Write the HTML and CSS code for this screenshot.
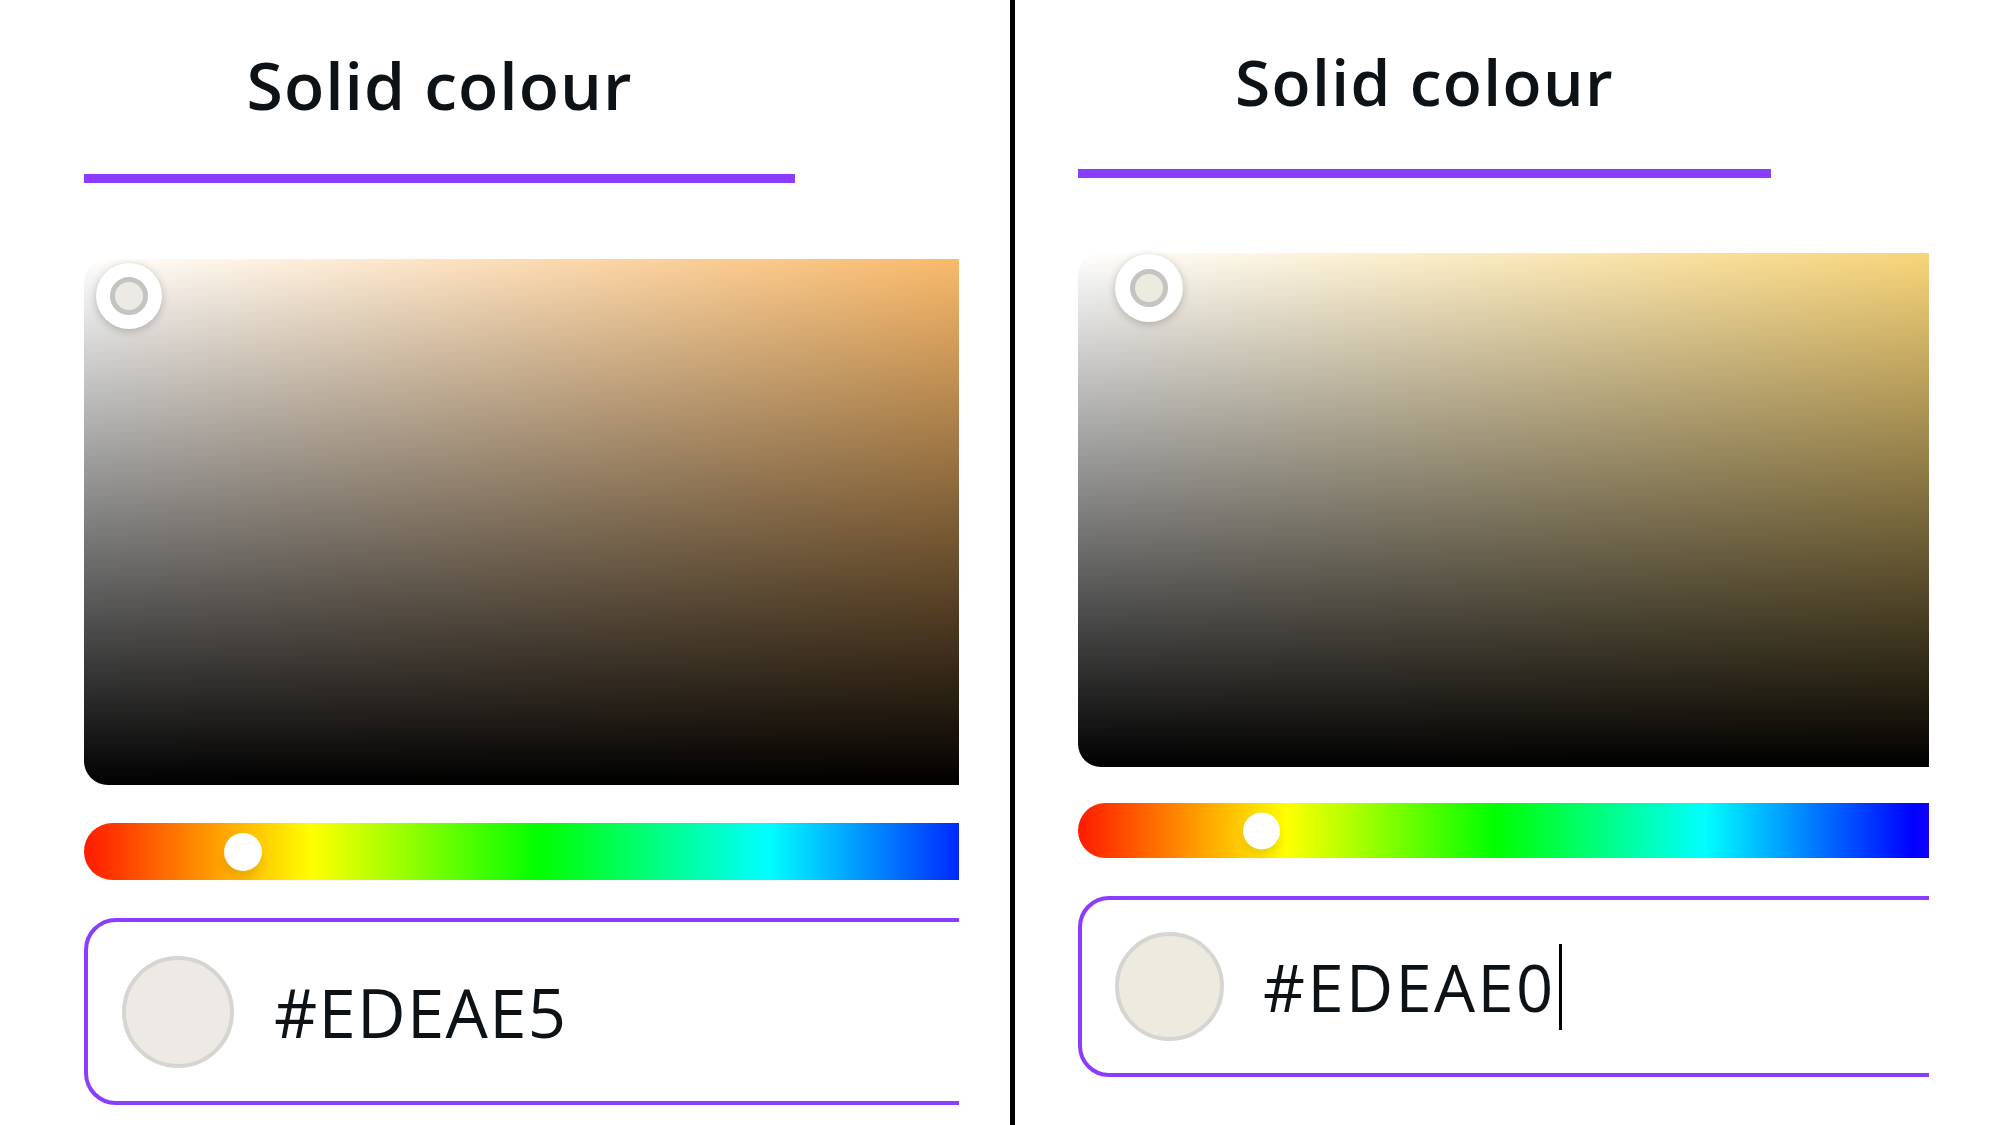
FILE: index.html
```html
<!DOCTYPE html>
<html lang="en">
<head>
<meta charset="utf-8">
<title>Solid colour picker comparison</title>
<link rel="stylesheet" href="styles.css">
</head>
<body>
<main class="stage">
  <section class="shot shot-a">
    <div class="crop crop-a">
      <div class="panel panel-a">
        <div class="tabs">
          <div class="tab tab-active">
            <span class="tab-label">Solid colour</span>
            <span class="tab-bar"></span>
          </div>
          <div class="tab tab-next">
            <span class="tab-label">G</span>
          </div>
        </div>
        <div class="picker picker-a">
          <span class="handle"><span class="handle-dot dot-a"></span></span>
        </div>
        <div class="hue">
          <span class="hue-thumb"></span>
        </div>
        <div class="field">
          <span class="swatch swatch-a"></span>
          <span class="hex">#EDEAE5</span>
        </div>
      </div>
    </div>
  </section>
  <div class="divider"></div>
  <section class="shot shot-b">
    <div class="crop crop-b">
      <div class="panel panel-b">
        <div class="tabs">
          <div class="tab tab-active">
            <span class="tab-label">Solid colour</span>
            <span class="tab-bar"></span>
          </div>
        </div>
        <div class="picker picker-b">
          <span class="handle"><span class="handle-dot dot-b"></span></span>
        </div>
        <div class="hue">
          <span class="hue-thumb"></span>
        </div>
        <div class="field">
          <span class="swatch swatch-b"></span>
          <span class="hex">#EDEAE0</span><span class="caret"></span>
        </div>
      </div>
    </div>
  </section>
</main>
</body>
</html>
```

FILE: styles.css
```css
* {
  box-sizing: border-box;
}

html,
body {
  margin: 0;
  padding: 0;
  background: #ffffff;
}

body {
  font-family: "Open Sans", "Noto Sans", sans-serif;
  color: #0d1216;
}

.stage {
  display: flex;
  width: 2000px;
  height: 1125px;
  overflow: hidden;
}

.shot {
  height: 100%;
  background: #ffffff;
}

.shot-a {
  width: 1010px;
  flex: none;
}

.shot-b {
  flex: 1;
}

.divider {
  width: 5px;
  flex: none;
  background: #000000;
}

.crop {
  height: 100%;
  overflow: hidden;
}

.crop-a {
  width: 959px;
}

.crop-b {
  width: 914px;
}

.panel {
  width: 1600px;
}

.tabs {
  display: flex;
}

.tab {
  display: flex;
  flex-direction: column;
  align-items: center;
  flex: none;
}

.tab-label {
  font-weight: 600;
  white-space: nowrap;
}

.tab-bar {
  display: block;
  width: 100%;
  height: 9px;
  background: #8b3dff;
}

.tab-next {
  align-items: flex-start;
}

.picker {
  position: relative;
  border-radius: 24px 0 0 24px;
}

.handle {
  position: absolute;
  display: flex;
  align-items: center;
  justify-content: center;
  border-radius: 50%;
  background: #ffffff;
  box-shadow: 0 2px 9px rgba(0, 0, 0, 0.22);
}

.handle-dot {
  display: block;
  border-radius: 50%;
  border: 5px solid #c4c4c2;
}

.dot-a {
  background: #edeae5;
}

.dot-b {
  background: #edeae0;
}

.hue {
  position: relative;
  background: linear-gradient(to right,
      #ff1a00 0%,
      #ffff00 16.67%,
      #00ff00 33.33%,
      #00ffff 50%,
      #0000ff 66.67%,
      #ff00ff 83.33%,
      #ff0000 100%);
}

.hue-thumb {
  position: absolute;
  top: 50%;
  transform: translateY(-50%);
  border-radius: 50%;
  background: #ffffff;
  box-shadow: 0 7px 8px rgba(0, 0, 0, 0.08);
}

.field {
  display: flex;
  align-items: center;
  border: 4px solid #8b3dff;
}

.swatch {
  display: block;
  flex: none;
  border-radius: 50%;
  border: 4px solid #d6d5d2;
}

.swatch-a {
  background: #edeae5;
}

.swatch-b {
  background: #edeae0;
}

.hex {
  font-weight: 400;
  white-space: nowrap;
  color: #0d1216;
}

.caret {
  display: inline-block;
  width: 3px;
  height: 86px;
  margin-left: 3px;
  background: #000000;
}

/* ---------- left screenshot ---------- */
.panel-a {
  padding-top: 51px;
  padding-left: 84px;
}

.panel-a .tab-active {
  width: 711px;
}

.panel-a .tab-next {
  width: 300px;
  padding-left: 161px;
}

.panel-a .tab-label {
  font-size: 66px;
  line-height: 66px;
  letter-spacing: 1px;
}

.panel-a .tab-bar {
  margin-top: 57px;
}

.picker-a {
  margin-top: 76px;
  width: 1368px;
  height: 526px;
  background:
    linear-gradient(to bottom, rgba(0, 0, 0, 0), #000000),
    linear-gradient(to right, #ffffff, rgb(246, 146, 22));
}

.panel-a .handle {
  left: 12px;
  top: 4px;
  width: 66px;
  height: 66px;
}

.panel-a .handle-dot {
  width: 38px;
  height: 38px;
}

.panel-a .hue {
  margin-top: 38px;
  width: 1368px;
  height: 57px;
  border-radius: 28.5px;
}

.panel-a .hue-thumb {
  left: 140px;
  width: 38px;
  height: 38px;
}

.panel-a .field {
  margin-top: 38px;
  width: 1368px;
  height: 187px;
  border-radius: 32px;
  padding-left: 34px;
}

.panel-a .swatch {
  width: 112px;
  height: 112px;
}

.panel-a .hex {
  margin-left: 40px;
  font-size: 67px;
  line-height: 90px;
  letter-spacing: 1.3px;
}

/* ---------- right screenshot ---------- */
.panel-b {
  padding-top: 50px;
  padding-left: 63px;
}

.panel-b .tab-active {
  width: 693px;
}

.panel-b .tab-label {
  font-size: 64px;
  line-height: 64px;
  letter-spacing: 1.4px;
}

.panel-b .tab-bar {
  margin-top: 55px;
}

.picker-b {
  margin-top: 75px;
  width: 1254px;
  height: 514px;
  border-radius: 23px 0 0 23px;
  background:
    linear-gradient(to bottom, rgba(0, 0, 0, 0), #000000),
    linear-gradient(to right, #ffffff, rgb(245, 193, 58));
}

.panel-b .handle {
  left: 37px;
  top: 1px;
  width: 68px;
  height: 68px;
}

.panel-b .handle-dot {
  width: 38px;
  height: 38px;
}

.panel-b .hue {
  margin-top: 36px;
  width: 1254px;
  height: 55px;
  border-radius: 27.5px;
}

.panel-b .hue-thumb {
  left: 165px;
  width: 37px;
  height: 37px;
}

.panel-b .field {
  margin-top: 38px;
  width: 1254px;
  height: 181px;
  border-radius: 31px;
  padding-left: 33px;
}

.panel-b .swatch {
  width: 109px;
  height: 109px;
}

.panel-b .hex {
  margin-left: 39px;
  font-size: 65px;
  line-height: 88px;
  letter-spacing: 2.4px;
}
```
